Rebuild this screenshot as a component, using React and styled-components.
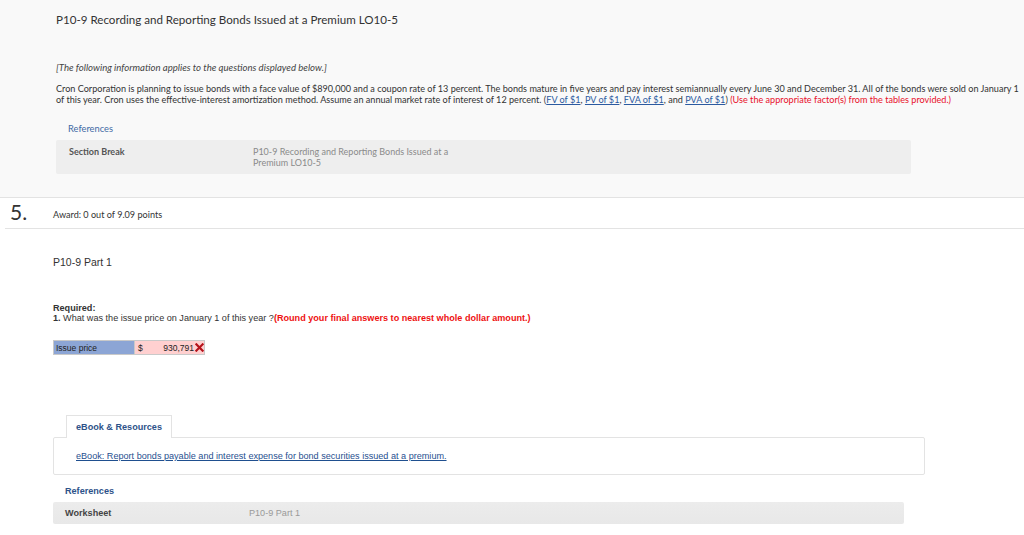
import React from "react";
import styled, { createGlobalStyle } from "styled-components";

const Global = createGlobalStyle`
  html, body { margin: 0; padding: 0; background: #ffffff; }
  body { font-family: Lato, "Open Sans", sans-serif; color: #333; overflow: hidden; }
  * { box-sizing: border-box; }
`;

const Page = styled.div`
  width: 1024px;
  height: 535px;
  overflow: hidden;
  position: relative;
`;

const Header = styled.section`
  background: #f9f9f9;
  border-bottom: 1px solid #e3e3e3;
  padding: 11px 0 0 56px;
  height: 198px;
`;

const Title = styled.h1`
  margin: 0;
  font-size: 11.6px;
  line-height: 17px;
  font-weight: 400;
  color: #333;
`;

const Intro = styled.p`
  margin: 34px 0 0;
  font-size: 9.6px;
  line-height: 11px;
  font-style: italic;
  color: #444;
`;

const Para = styled.p`
  margin: 10px 0 0;
  font-size: 9.1px;
  line-height: 11px;
  color: #333;
  white-space: nowrap;
`;

const Link = styled.a`
  color: #2c5aa0;
  text-decoration: underline;
`;

const Red = styled.span`
  color: ${p => (p.$bold ? "#ee1111" : "#e8102a")};
  font-weight: ${p => (p.$bold ? 700 : 400)};
`;

const RefLink = styled.div`
  margin: 18px 0 0 12px;
  font-size: 9.3px;
  line-height: 11px;
  color: #3f6aa5;
`;

const RefBox = styled.div`
  margin-top: 6px;
  width: 855px;
  height: 34px;
  background: #eeeeee;
  border-radius: 2px;
  display: grid;
  grid-template-columns: 184px 1fr;
  padding: 6px 0 0 13px;
  font-size: 9px;
  line-height: 11px;
`;

const RefLabel = styled.div`
  color: #555;
  font-weight: 700;
`;

const RefValue = styled.div`
  color: #8a8a8a;
  white-space: nowrap;
`;

const QRow = styled.div`
  margin-left: 5px;
  height: 31px;
  border-bottom: 1px solid #e3e3e3;
  display: flex;
  align-items: center;
  padding-left: 5px;
`;

const QNum = styled.div`
  font-size: 21px;
  line-height: 20px;
  width: 43px;
  color: #333;
  margin-top: -2px;
`;

const Award = styled.div`
  font-size: 9.1px;
  color: #333;
  margin-top: 2px;
`;

const Body = styled.div`
  padding-left: 53px;
  font-family: "Liberation Sans", Arial, sans-serif;
`;

const PartTitle = styled.h2`
  margin: 27px 0 0;
  font-size: 10.5px;
  line-height: 12px;
  font-weight: 400;
  color: #333;
`;

const Required = styled.div`
  margin-top: 35px;
  font-size: 9.1px;
  line-height: 10px;
  color: #333;
`;

const AnswerTable = styled.div`
  margin-top: 17px;
  display: inline-flex;
  height: 15px;
  border: 1px solid #c9c9c9;
  font-size: 8.5px;
`;

const LabelCell = styled.div`
  width: 81px;
  background: #8ca5d5;
  color: #222;
  padding-left: 2px;
  display: flex;
  align-items: center;
  border-right: 1px solid #c9c9c9;
`;

const ValueCell = styled.div`
  width: 69px;
  background: #ffd0d0;
  color: #222;
  display: flex;
  align-items: center;
  padding: 0 0 0 3px;
`;

const Dollar = styled.span`
  flex: 1;
`;

const Tabs = styled.div`
  margin-top: 60px;
  padding-left: 13px;
  display: flex;
`;

const Tab = styled.div`
  width: 106px;
  height: 23px;
  background: #fff;
  border: 1px solid #e3e3e3;
  border-bottom: none;
  display: flex;
  align-items: center;
  justify-content: center;
  font-size: 9.1px;
  font-weight: 700;
  color: #2d5289;
  position: relative;
  z-index: 1;
  margin-bottom: -1px;
`;

const Panel = styled.div`
  width: 872px;
  height: 38px;
  border: 1px solid #e3e3e3;
  border-radius: 2px;
  padding: 13px 0 0 22px;
  font-size: 9.1px;
`;

const EbookLink = styled.a`
  color: #1f4f8f;
  text-decoration: underline;
`;

const RefTitle = styled.div`
  margin: 11px 0 0 12px;
  font-size: 9.1px;
  line-height: 11px;
  font-weight: 700;
  color: #2d5289;
`;

const WorkRow = styled.div`
  margin-top: 5px;
  width: 851px;
  height: 22px;
  background: linear-gradient(#ececec, #e8e8e8);
  border-radius: 2px;
  display: grid;
  grid-template-columns: 184px 1fr;
  align-items: center;
  padding-left: 12px;
  font-size: 9.1px;
`;

const WorkLabel = styled.div`
  font-weight: 700;
  color: #444;
`;

const WorkValue = styled.div`
  color: #999;
`;

function XIcon() {
  return (
    <svg width="9" height="9" viewBox="0 0 10 10" style={{ marginLeft: 1 }}>
      <path d="M1.5 1.5 L8.5 8.5 M8.5 1.5 L1.5 8.5" stroke="#b5121b" strokeWidth="2.4" strokeLinecap="square" />
    </svg>
  );
}

export default function App() {
  return (
    <Page>
      <Global />
      <Header>
        <Title>P10-9 Recording and Reporting Bonds Issued at a Premium LO10-5</Title>
        <Intro>[The following information applies to the questions displayed below.]</Intro>
        <Para>
          Cron Corporation is planning to issue bonds with a face value of $890,000 and a coupon rate of 13 percent. The bonds mature in five years and pay interest semiannually every June 30 and December 31. All of the bonds were sold on January 1
          <br />
          of this year. Cron uses the effective-interest amortization method. Assume an annual market rate of interest of 12 percent. (<Link>FV of $1</Link>, <Link>PV of $1</Link>, <Link>FVA of $1</Link>, and <Link>PVA of $1</Link>) <Red>(Use the appropriate factor(s) from the tables provided.)</Red>
        </Para>
        <RefLink>References</RefLink>
        <RefBox>
          <RefLabel>Section Break</RefLabel>
          <RefValue>
            P10-9 Recording and Reporting Bonds Issued at a
            <br />
            Premium LO10-5
          </RefValue>
        </RefBox>
      </Header>
      <QRow>
        <QNum>5.</QNum>
        <Award>Award: 0 out of 9.09 points</Award>
      </QRow>
      <Body>
        <PartTitle>P10-9 Part 1</PartTitle>
        <Required>
          <b>Required:</b>
          <br />
          <b>1.</b> What was the issue price on January 1 of this year ?<Red $bold>(Round your final answers to nearest whole dollar amount.)</Red>
        </Required>
        <AnswerTable>
          <LabelCell>Issue price</LabelCell>
          <ValueCell>
            <Dollar>$</Dollar>
            930,791
            <XIcon />
          </ValueCell>
        </AnswerTable>
        <Tabs>
          <Tab>eBook &amp; Resources</Tab>
        </Tabs>
        <Panel>
          <EbookLink>eBook: Report bonds payable and interest expense for bond securities issued at a premium.</EbookLink>
        </Panel>
        <RefTitle>References</RefTitle>
        <WorkRow>
          <WorkLabel>Worksheet</WorkLabel>
          <WorkValue>P10-9 Part 1</WorkValue>
        </WorkRow>
      </Body>
    </Page>
  );
}
